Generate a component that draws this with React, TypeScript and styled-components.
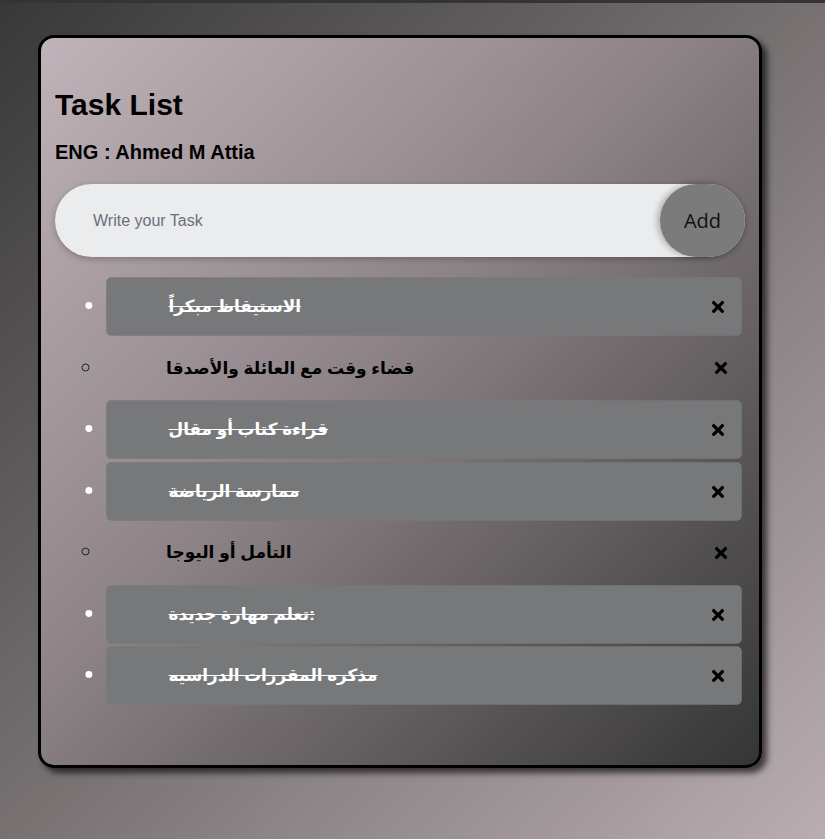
import React, { useState } from "react";
import styled, { createGlobalStyle } from "styled-components";
import { FaTimes } from "react-icons/fa";

const GlobalStyle = createGlobalStyle`
  html, body {
    margin: 0;
    padding: 0;
  }
  body {
    min-height: 100vh;
    border-top: 3px solid #343434;
    box-sizing: border-box;
    background: linear-gradient(to bottom right, #383838 0%, #777172 50%, #b9adb2 100%);
    font-family: "Liberation Sans", Arial, sans-serif;
  }
`;

const Page = styled.div`
  padding: 32px 0 70px 38px;
`;

const Card = styled.div`
  box-sizing: border-box;
  width: 724px;
  border: 3px solid #000;
  border-radius: 16px;
  background: linear-gradient(to bottom right, #c0b3b9 0%, #8d8387 45%, #353535 100%);
  box-shadow: 5px 5px 6px rgba(0, 0, 0, 0.65);
  padding: 50px 14px 57px 14px;
`;

const Title = styled.h1`
  margin: 0;
  font-size: 30px;
  line-height: 34px;
  font-weight: 700;
  color: #000;
`;

const Author = styled.h3`
  margin: 19px 0 0 0;
  font-size: 20px;
  line-height: 23px;
  font-weight: 700;
  color: #000;
`;

const InputRow = styled.div`
  display: flex;
  margin-top: 20px;
  height: 73px;
`;

const TaskInput = styled.input`
  flex: 1;
  min-width: 0;
  height: 73px;
  box-sizing: border-box;
  border: none;
  outline: none;
  border-radius: 40px;
  background: #ebecee;
  padding: 0 100px 0 38px;
  font-family: "Liberation Sans", Arial, sans-serif;
  font-size: 16px;
  color: #222;
  box-shadow: 0 2px 6px rgba(0, 0, 0, 0.25);
  &::placeholder {
    color: #6b6f78;
  }
`;

const AddButton = styled.button`
  flex: none;
  width: 85px;
  height: 73px;
  margin-left: -85px;
  border: none;
  border-radius: 40px;
  background: #7b7b7b;
  color: #111;
  font-family: "Open Sans", "Noto Sans", sans-serif;
  font-size: 20px;
  cursor: pointer;
  box-shadow: -3px 0 6px rgba(0, 0, 0, 0.25);
`;

const List = styled.ul`
  margin: 20px 0 0 0;
  padding: 0 0 0 48px;
`;

const Item = styled.li<{ $done: boolean }>`
  list-style: ${(p) => (p.$done ? "disc" : "circle")};
  height: 59px;
  margin-bottom: 2.5px;
  border-radius: 5px;
  background: ${(p) => (p.$done ? "#77787a" : "transparent")};
  transform: ${(p) => (p.$done ? "scale(0.99)" : "none")};
  font-size: 24px;
  &::marker {
    color: ${(p) => (p.$done ? "#fff" : "#222")};
  }
`;

const Row = styled.div`
  display: flex;
  align-items: center;
  height: 100%;
  padding: 0 15px 0 63px;
  box-sizing: border-box;
`;

const TaskText = styled.span<{ $done: boolean }>`
  flex: 1;
  font-family: "Liberation Sans", "DejaVu Sans", Arial, sans-serif;
  font-size: 17px;
  font-weight: 700;
  color: ${(p) => (p.$done ? "#fff" : "#000")};
  text-decoration: ${(p) => (p.$done ? "line-through" : "none")};
  text-decoration-color: ${(p) => (p.$done ? "#fff" : "#000")};
  cursor: pointer;
`;

const Remove = styled.span`
  display: flex;
  align-items: center;
  color: #000;
  font-size: 18px;
  cursor: pointer;
`;

type Task = { text: string; done: boolean };

const initial: Task[] = [
  { text: "الاستيقاظ مبكراً", done: true },
  { text: "قضاء وقت مع العائلة والأصدقا", done: false },
  { text: "قراءة كتاب أو مقال", done: true },
  { text: "ممارسة الرياضة", done: true },
  { text: "التأمل أو اليوجا", done: false },
  { text: "تعلم مهارة جديدة:", done: true },
  { text: "مذكره المقررات الدراسيه", done: true },
];

export default function App() {
  const [tasks, setTasks] = useState<Task[]>(initial);
  const [value, setValue] = useState("");

  const add = () => {
    if (!value.trim()) return;
    setTasks([...tasks, { text: value, done: false }]);
    setValue("");
  };

  return (
    <>
      <GlobalStyle />
      <Page>
        <Card>
          <Title>Task List</Title>
          <Author>ENG : Ahmed M Attia</Author>
          <InputRow>
            <TaskInput
              placeholder="Write your Task"
              value={value}
              onChange={(e) => setValue(e.target.value)}
            />
            <AddButton onClick={add}>Add</AddButton>
          </InputRow>
          <List>
            {tasks.map((t, i) => (
              <Item key={i} $done={t.done}>
                <Row>
                  <TaskText
                    $done={t.done}
                    onClick={() =>
                      setTasks(tasks.map((x, j) => (j === i ? { ...x, done: !x.done } : x)))
                    }
                  >
                    {t.text}
                  </TaskText>
                  <Remove onClick={() => setTasks(tasks.filter((_, j) => j !== i))}>
                    <FaTimes />
                  </Remove>
                </Row>
              </Item>
            ))}
          </List>
        </Card>
      </Page>
    </>
  );
}
